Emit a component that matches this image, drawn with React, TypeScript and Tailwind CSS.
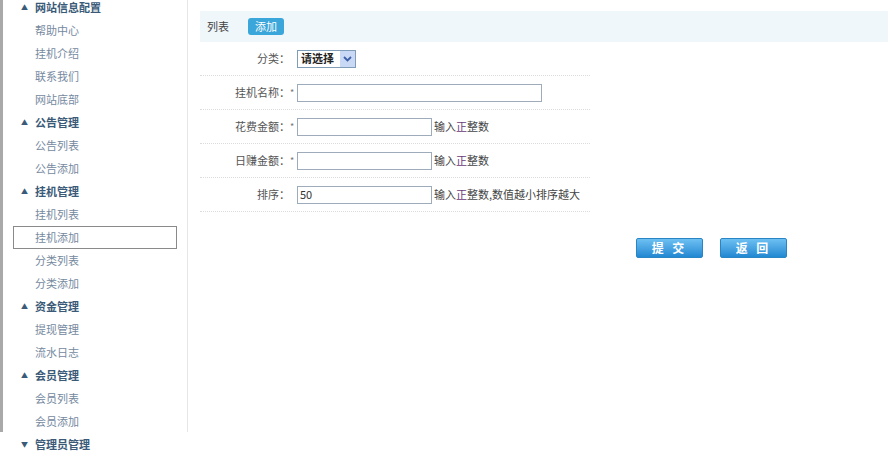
import React from 'react';

type Item = { label: string; header?: boolean; down?: boolean; active?: boolean };

const menu: Item[] = [
  { label: '网站信息配置', header: true },
  { label: '帮助中心' },
  { label: '挂机介绍' },
  { label: '联系我们' },
  { label: '网站底部' },
  { label: '公告管理', header: true },
  { label: '公告列表' },
  { label: '公告添加' },
  { label: '挂机管理', header: true },
  { label: '挂机列表' },
  { label: '挂机添加', active: true },
  { label: '分类列表' },
  { label: '分类添加' },
  { label: '资金管理', header: true },
  { label: '提现管理' },
  { label: '流水日志' },
  { label: '会员管理', header: true },
  { label: '会员列表' },
  { label: '会员添加' },
  { label: '管理员管理', header: true, down: true },
];

const font = { fontFamily: '"Noto Sans CJK SC", "Noto Sans", sans-serif' };

function Row({ label, star, children }: { label: string; star?: boolean; children: React.ReactNode }) {
  return (
    <div className="flex h-[34px] items-center border-b border-dotted border-[#dcdcdc]">
      <div className="w-[90px] text-right text-[11px] text-[#555]">{label}：</div>
      <div className="w-[7px] text-[9px] leading-none text-[#777]">{star ? '*' : ''}</div>
      {children}
    </div>
  );
}

function Hint({ text }: { text: string }) {
  return (
    <span className="ml-[2px] whitespace-nowrap text-[11px] text-[#444]">
      输入<span className="text-[#6b3b7a]">正</span>
      {text}
    </span>
  );
}

export default function App() {
  return (
    <div className="flex h-[470px] w-[888px] bg-white" style={font}>
      <aside className="flex h-[432px] w-[188px] flex-col border-l-[3px] border-r border-l-[#a9a9a9] border-r-[#e6e6e6]">
        <div className="-mt-[4px]">
          {menu.map((m) => (
            <div key={m.label} className="h-[23px] px-[10px]">
              <div
                className={
                  'flex h-[23px] items-center ' +
                  (m.active ? 'border border-[#8a8a8a]' : 'border border-transparent')
                }
              >
                {m.header ? (
                  <>
                    <span className="w-[21px] text-center text-[7px] text-[#3a5a78]">
                      {m.down ? '▼' : '▲'}
                    </span>
                    <span className="text-[11px] font-bold text-[#3a5a78]">{m.label}</span>
                  </>
                ) : (
                  <span className="pl-[21px] text-[11px] text-[#7589a0]">{m.label}</span>
                )}
              </div>
            </div>
          ))}
        </div>
      </aside>

      <main className="flex-1 pl-[12px]">
        <div className="mt-[11px] flex h-[31px] items-center bg-[#eff7fb] pl-[7px]">
          <span className="text-[11px] text-[#444]">列表</span>
          <span className="ml-[19px] flex h-[17px] w-[36px] items-center justify-center rounded-[3px] bg-[#3aa6d9] text-[11px] text-white">
            添加
          </span>
        </div>

        <div className="w-[390px]">
          <Row label="分类">
            <div className="flex h-[18px] w-[59px] items-center border border-[#7f9db9] bg-white">
              <span className="flex-1 pl-[3px] text-[11px] font-bold text-[#222]">请选择</span>
              <span className="flex h-[16px] w-[15px] items-center justify-center bg-[#c9d8f5]">
                <svg width="9" height="6" viewBox="0 0 9 6">
                  <path d="M1 1 L4.5 4.5 L8 1" fill="none" stroke="#3d5fa8" strokeWidth="1.8" />
                </svg>
              </span>
            </div>
          </Row>
          <Row label="挂机名称" star>
            <div className="h-[18px] w-[245px] border border-[#9eabbb] bg-white" />
          </Row>
          <Row label="花费金额" star>
            <div className="h-[18px] w-[135px] border border-[#9eabbb] bg-white" />
            <Hint text="整数" />
          </Row>
          <Row label="日赚金额" star>
            <div className="h-[18px] w-[135px] border border-[#9eabbb] bg-white" />
            <Hint text="整数" />
          </Row>
          <Row label="排序">
            <div className="flex h-[18px] w-[135px] items-center border border-[#9eabbb] bg-white pl-[2px] text-[11px] text-[#333]">
              50
            </div>
            <Hint text="整数,数值越小排序越大" />
          </Row>
        </div>

        <div className="mt-[26px] flex gap-[17px] pl-[436px]">
          {['提 交', '返 回'].map((t) => (
            <div
              key={t}
              className="flex h-[20px] w-[67px] items-center justify-center rounded-[2px] border border-[#2a85c4] bg-gradient-to-b from-[#6cc0f2] to-[#1f88d2] text-[12px] font-bold tracking-[3px] text-white"
            >
              {t}
            </div>
          ))}
        </div>
      </main>
    </div>
  );
}
